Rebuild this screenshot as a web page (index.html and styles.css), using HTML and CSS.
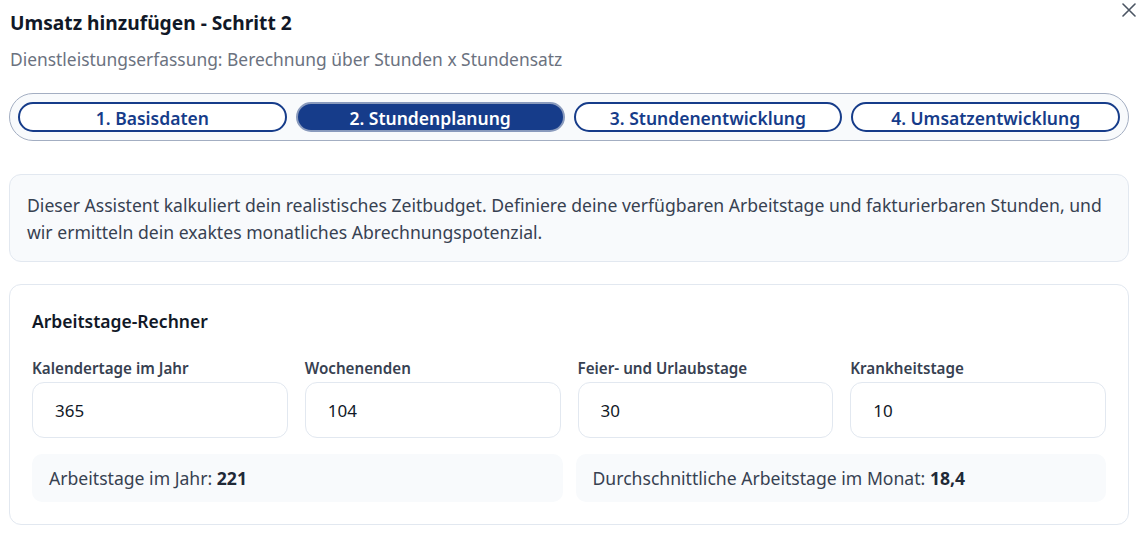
FILE: index.html
```html
<!DOCTYPE html>
<html lang="de">
<head>
<meta charset="utf-8">
<title>Umsatz hinzufügen - Schritt 2</title>
<link rel="stylesheet" href="styles.css">
</head>
<body>
<div class="dialog">
  <button class="close" aria-label="Schließen">
    <svg width="14" height="14" viewBox="0 0 14 14"><path d="M1 1L13 13M13 1L1 13" stroke="#4b5563" stroke-width="1.6" fill="none" stroke-linecap="round"/></svg>
  </button>
  <header class="head">
    <h1 class="title">Umsatz hinzufügen - Schritt 2</h1>
    <p class="subtitle">Dienstleistungserfassung: Berechnung über Stunden x Stundensatz</p>
  </header>

  <nav class="stepper">
    <button class="step">1. Basisdaten</button>
    <button class="step active">2. Stundenplanung</button>
    <button class="step">3. Stundenentwicklung</button>
    <button class="step">4. Umsatzentwicklung</button>
  </nav>

  <div class="info">
    Dieser Assistent kalkuliert dein realistisches Zeitbudget. Definiere deine verfügbaren Arbeitstage und fakturierbaren Stunden, und wir ermitteln dein exaktes monatliches Abrechnungspotenzial.
  </div>

  <section class="card">
    <h2 class="card-title">Arbeitstage-Rechner</h2>
    <div class="fields">
      <label class="field"><span class="label">Kalendertage im Jahr</span><input class="input" value="365"></label>
      <label class="field"><span class="label">Wochenenden</span><input class="input" value="104"></label>
      <label class="field"><span class="label">Feier- und Urlaubstage</span><input class="input" value="30"></label>
      <label class="field"><span class="label">Krankheitstage</span><input class="input" value="10"></label>
    </div>
    <div class="results">
      <div class="result">Arbeitstage im Jahr: <b>221</b></div>
      <div class="result">Durchschnittliche Arbeitstage im Monat: <b>18,4</b></div>
    </div>
  </section>
</div>
</body>
</html>
```
FILE: styles.css
```css
* { box-sizing: border-box; }
html, body { margin: 0; padding: 0; background: #fff; }
body {
  font-family: "Noto Sans", "Open Sans", sans-serif;
  color: #111827;
  width: 1138px;
  height: 535px;
  overflow: hidden;
}
.dialog {
  position: relative;
  padding: 8px 9px 0 9px;
}
.close {
  position: absolute;
  top: 2px;
  right: 1px;
  width: 16px;
  height: 16px;
  padding: 0;
  border: 0;
  background: transparent;
  display: flex;
  align-items: center;
  justify-content: center;
}
.head { padding-left: 1px; }
.title {
  margin: 0;
  font-size: 19.2px;
  font-weight: 700;
  line-height: 30px;
  color: #111827;
}
.subtitle {
  margin: 10px 0 0;
  font-size: 17.4px;
  line-height: 22px;
  color: #6b7280;
}
.stepper {
  margin-top: 23px;
  height: 48px;
  border: 1px solid #a3aec2;
  border-radius: 24px;
  background: #f8fafc;
  padding: 0 8px;
  display: grid;
  grid-template-columns: repeat(4, 1fr);
  gap: 9px;
  align-items: center;
}
.step {
  height: 30px;
  border: 2px solid #163c8a;
  border-radius: 15px;
  background: #fff;
  color: #163c8a;
  font-family: inherit;
  font-size: 17.5px;
  font-weight: 600;
  padding: 0;
  line-height: 28px;
}
.step.active {
  background: #163c8a;
  color: #fff;
  border-color: #8a9bbd;
}
.info {
  margin-top: 33px;
  background: #f8fafc;
  border: 1px solid #e2e8f0;
  border-radius: 12px;
  padding: 17px 17px 15px;
  font-size: 17.6px;
  line-height: 27px;
  color: #374151;
}
.card {
  margin-top: 22px;
  border: 1px solid #e2e8f0;
  border-radius: 12px;
  padding: 22px 22px 22px;
  background: #fff;
}
.card-title {
  margin: 0;
  font-size: 17.5px;
  font-weight: 600;
  line-height: 28px;
  color: #111827;
}
.fields {
  margin-top: 23px;
  display: grid;
  grid-template-columns: repeat(4, 1fr);
  gap: 17px;
}
.field { display: flex; flex-direction: column; gap: 4px; }
.label {
  font-size: 15.2px;
  font-weight: 600;
  line-height: 20px;
  color: #374151;
}
.input {
  height: 56px;
  border: 1px solid #e2e8f0;
  border-radius: 12px;
  padding: 0 22px;
  font-family: inherit;
  font-size: 17px;
  color: #111827;
  background: #fff;
  outline: none;
  width: 100%;
}
.results {
  margin-top: 16px;
  display: grid;
  grid-template-columns: 1fr 1fr;
  gap: 13px;
}
.result {
  height: 48px;
  background: #f8fafc;
  border-radius: 10px;
  padding: 0 17px;
  display: flex;
  align-items: center;
  font-size: 17.6px;
  color: #374151;
  white-space: pre;
}
.result b { font-weight: 700; color: #1f2937; }
```
